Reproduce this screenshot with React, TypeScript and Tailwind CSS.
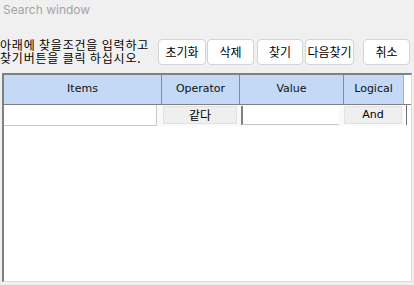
import React from "react";

const btn =
  "h-[26px] shrink-0 bg-white border border-[#d3d3d3] rounded-[4px] flex items-center justify-center text-[12px] text-black";

export default function App() {
  return (
    <div
      className="w-[414px] h-[285px] bg-[#f0f0f0] flex flex-col overflow-hidden"
      style={{ fontFamily: '"Noto Sans", "Noto Sans CJK KR", sans-serif' }}
    >
      <div className="h-[20px] pl-[3px] pt-[2px] text-[12px] leading-[16px] text-[#a3a3a3] font-['Inter',sans-serif]">
        Search window
      </div>
      <div className="mt-[17px] h-[28px] flex items-start">
        <div className="w-[158px] shrink-0 text-[12px] leading-[13px] text-black font-['Noto_Sans_CJK_KR',sans-serif] tracking-[0.8px] pt-[1px] whitespace-nowrap">
          <div className="h-[13px]">아래에 찾을조건을 입력하고</div>
          <div className="h-[13px]">찾기버튼을 클릭 하십시오.</div>
        </div>
        <div className="flex pt-[2px] font-['Noto_Sans_CJK_KR',sans-serif]">
          <div className={`${btn} w-[48px]`}>초기화</div>
          <div className={`${btn} w-[47px] ml-[1px]`}>삭제</div>
          <div className={`${btn} w-[46px] ml-[3px]`}>찾기</div>
          <div className={`${btn} w-[49px] ml-[2px]`}>다음찾기</div>
          <div className={`${btn} w-[47px] ml-[9px]`}>취소</div>
        </div>
      </div>
      <div className="mt-[8px] ml-[2px] w-[410px] h-[209px] bg-white border-t-2 border-l-2 border-t-[#808080] border-l-[#808080] border-r border-b border-r-[#dcdcdc] border-b-[#dcdcdc] flex flex-col">
        <div className="flex h-[30px] shrink-0 border-b border-[#808080] text-[11px] text-[#111] font-['DejaVu_Sans',sans-serif]">
          <div className="w-[158px] bg-[#c4d9f5] border-r border-[#8a8a8a] flex items-center justify-center">Items</div>
          <div className="w-[78px] bg-[#c4d9f5] border-r border-[#8a8a8a] flex items-center justify-center">Operator</div>
          <div className="w-[104px] bg-[#c4d9f5] border-r border-[#8a8a8a] flex items-center justify-center">Value</div>
          <div className="w-[60px] bg-[#c4d9f5] border-r border-[#b0b0b0] flex items-center justify-center">Logical</div>
        </div>
        <div className="flex h-[21px] shrink-0 items-start">
          <div className="w-[153px] h-[21px] bg-white border-r border-b border-[#c8c8c8]"></div>
          <div className="w-[5px] h-[21px] bg-[#f7f9fc]"></div>
          <div className="w-[78px] h-[21px] bg-[#f7f9fc] flex pt-[1px] pl-[1px]">
            <div className="w-[74px] h-[18px] bg-[#efefef] border border-[#e2e2e2] flex items-center justify-center text-[12px] leading-[12px] text-black font-['Noto_Sans_CJK_KR',sans-serif]">
              같다
            </div>
          </div>
          <div className="w-[104px] h-[21px] bg-[#f7f9fc] flex pt-[1px] pl-[1px]">
            <div className="w-[98px] h-[19px] bg-white border-l-2 border-l-[#808080] border-b border-b-[#c8c8c8]"></div>
          </div>
          <div className="w-[60px] h-[21px] bg-[#f7f9fc] flex pt-[1px]">
            <div className="w-[58px] h-[18px] bg-[#efefef] border border-[#e2e2e2] flex items-center justify-center text-[11px] text-black font-['DejaVu_Sans',sans-serif]">
              And
            </div>
          </div>
          <div className="w-[2px]"></div>
          <div className="w-[1px] h-[20px] bg-[#6e6e6e]"></div>
        </div>
        <div className="flex-1 bg-white"></div>
      </div>
    </div>
  );
}
